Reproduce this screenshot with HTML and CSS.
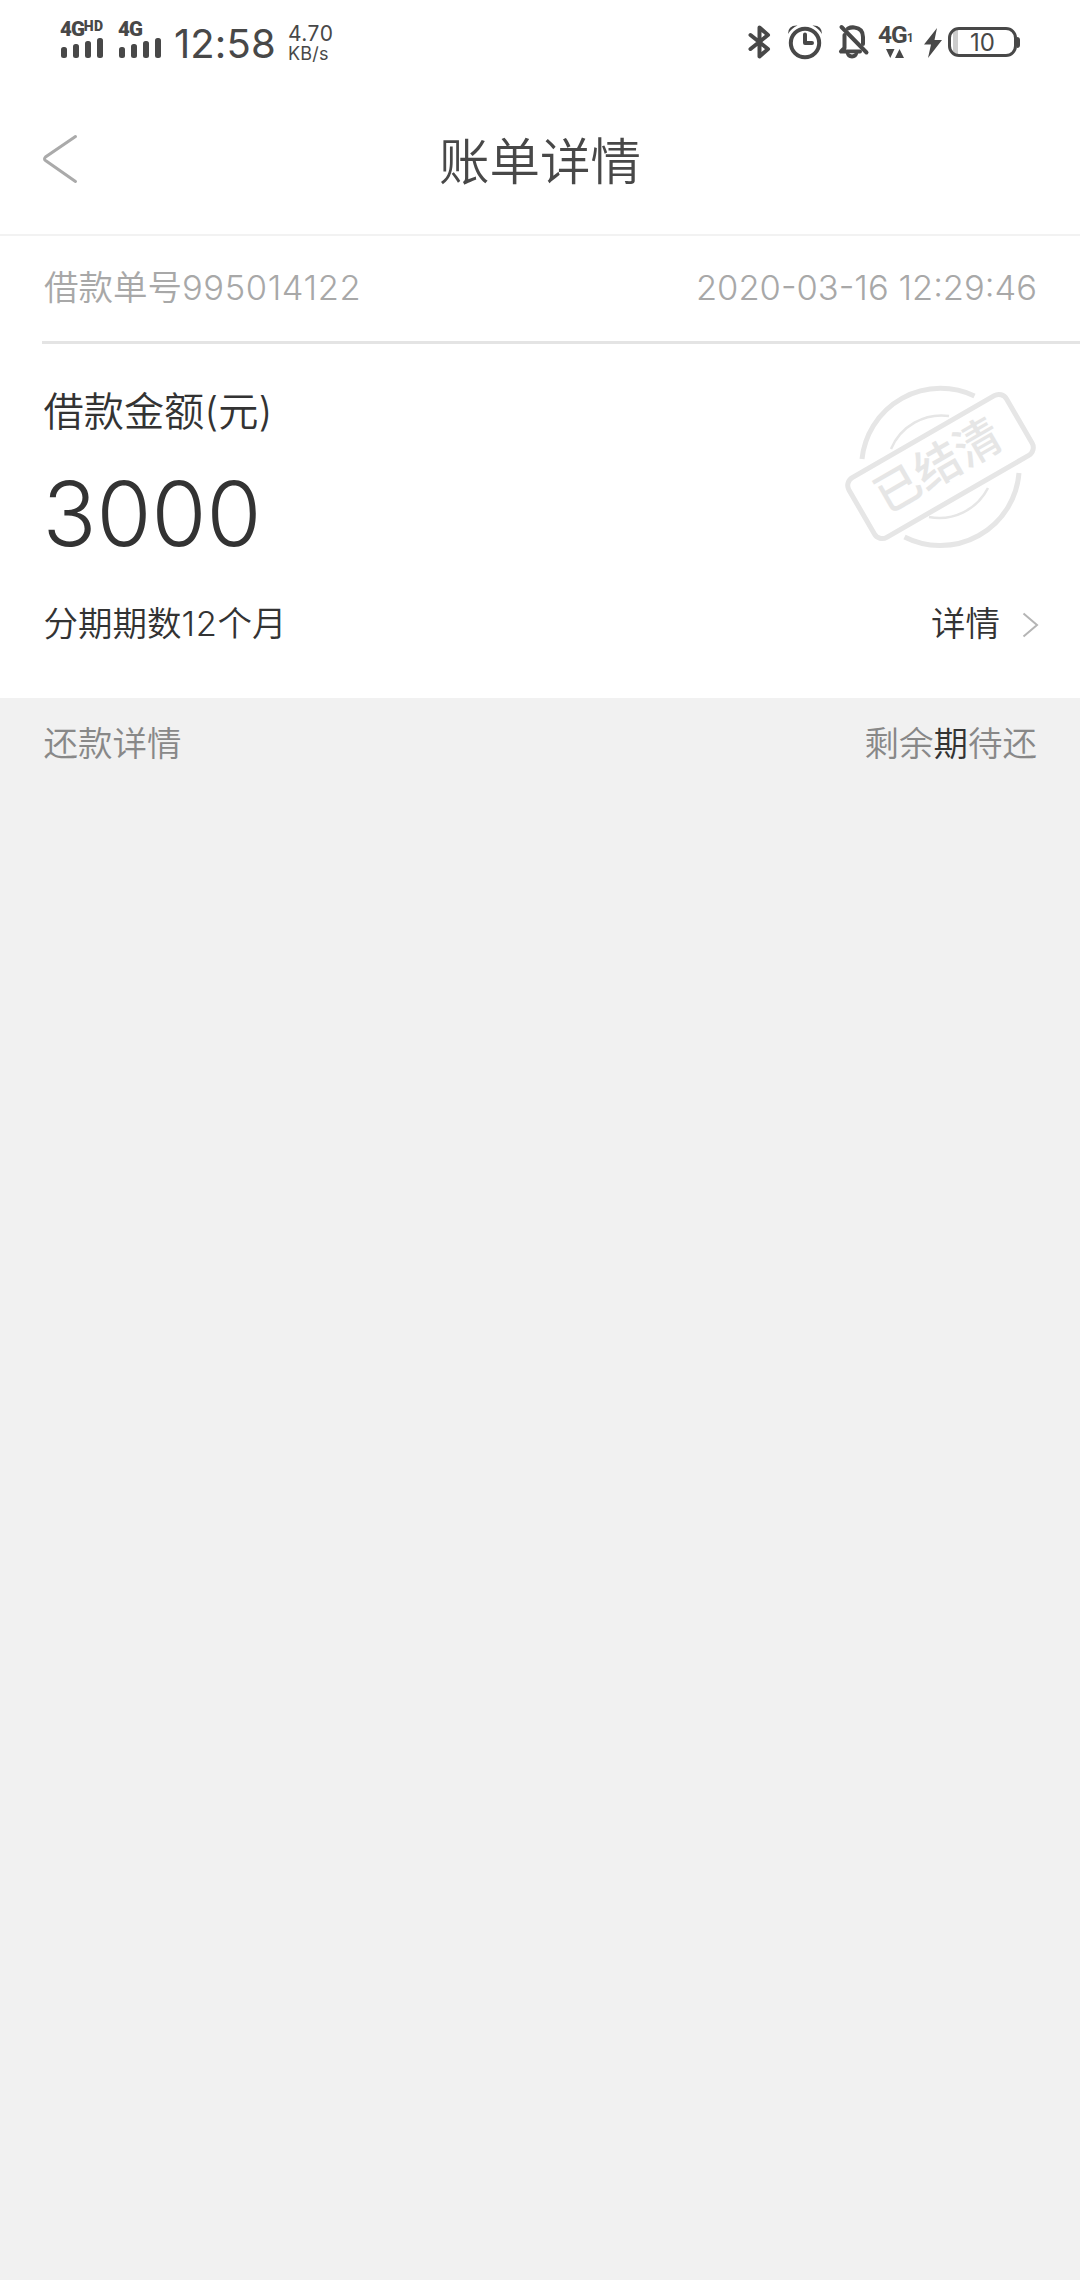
FILE: index.html
```html
<!DOCTYPE html>
<html lang="zh-CN">
<head>
<meta charset="utf-8">
<title>账单详情</title>
<link rel="stylesheet" href="styles.css">
</head>
<body>
<div class="status">
  <div class="signal signal-hd">
    <div class="net">4G<span class="hd">HD</span></div>
    <svg width="44" height="20" viewBox="0 0 44 20"><g class="fill"><rect x="1" y="9" width="6" height="11" rx="2.5"/><rect x="13" y="6" width="6" height="14" rx="2.5"/><rect x="25" y="3" width="6" height="17" rx="2.5"/><rect x="37" y="0" width="6" height="20" rx="2.5"/></g></svg>
  </div>
  <div class="signal">
    <div class="net">4G</div>
    <svg width="44" height="20" viewBox="0 0 44 20"><g class="fill"><rect x="1" y="9" width="6" height="11" rx="2.5"/><rect x="13" y="6" width="6" height="14" rx="2.5"/><rect x="25" y="3" width="6" height="17" rx="2.5"/><rect x="37" y="0" width="6" height="20" rx="2.5"/></g></svg>
  </div>
  <div class="clock">12:58</div>
  <div class="speed"><span class="rate">4.70</span><span class="unit">KB/s</span></div>
  <div class="icons">
    <svg class="bt" width="24" height="36" viewBox="0 0 24 36"><path class="line" d="M2.5 11 L20 25 L11.5 32.5 V3.5 L20 11 L2.5 25"/></svg>
    <svg class="alarm" width="36" height="36" viewBox="0 0 36 36"><circle class="line" cx="18" cy="19" r="14.2"/><path class="line" d="M18 10.500V19H25"/><path class="fill" d="M1 10Q1 1 10.500 1.500Q4.500 4 1 10ZM35 10Q35 1 25.500 1.500Q31.500 4 35 10Z"/></svg>
    <svg class="bell" width="32" height="36" viewBox="0 0 32 36"><path class="line" d="M6.500 11V24L3 27.500H22M10 4.500Q13 3 16.500 3.500Q25 4.500 25 13V20"/><path class="line" d="M3.500 3L28.500 28.500"/><path class="fill" d="M7.500 28H20.500Q19.500 34.500 14 34.500Q8.500 34.500 7.500 28Z"/><path class="hole" d="M11 29.300H17Q14 31.500 11 29.300Z"/></svg>
    <div class="data">
      <div class="gen">4G<span class="sim">1</span></div>
      <svg width="18" height="9" viewBox="0 0 18 9"><path class="fill" d="M0 0H8.500L4.250 9ZM9 9L13.500 0L18 9Z"/></svg>
    </div>
    <svg class="bolt" width="20" height="32" viewBox="0 0 20 32"><path class="fill" d="M14 1L1 17.500H8L5 31L19 13H11.500Z"/></svg>
    <div class="battery"><span class="level">10</span></div>
    <span class="tip"></span>
  </div>
</div>
<header class="header">
  <svg class="back" width="36" height="50" viewBox="0 0 36 50"><path d="M33.500 2.500L3.500 23Q1.500 25 3.500 26.500L33.500 47.500"/></svg>
  <h1 class="title">账单详情</h1>
</header>
<main>
  <section class="order">
    <span>借款单号<span class="number">995014122</span></span><time class="time">2020<span class="dash">-</span>03<span class="dash">-</span>16 12:29:46</time>
  </section>
  <section class="loan">
    <div class="top">
      <div>
        <div class="label">借款金额(元)</div>
        <div class="amount">3000</div>
      </div>
      <svg class="stamp" width="194" height="164" viewBox="843 385 194 164">
        <g class="ring"><path class="outer" d="M862 459A79 79 0 0 1 974.500 396M904.500 537A79 79 0 0 0 1019 473"/><path class="inner" d="M891 449A55 55 0 0 1 949 416M929 517A55 55 0 0 0 988 488"/><rect class="outer" x="-91" y="-34.500" width="182" height="69" rx="9" transform="translate(940.500 466.500) rotate(-30)"/></g>
        <text class="stamp-text" x="938" y="466" transform="rotate(-30 938 466)" text-anchor="middle" dy="16">已结清</text>
      </svg>
    </div>
    <div class="terms"><span>分期期数<span class="number">12</span>个月</span><span class="more">详情<svg width="17" height="26" viewBox="0 0 17 26"><path d="M1.500 1.500L15 13L1.500 24.500"/></svg></span></div>
  </section>
  <section class="repay"><span>还款详情</span><span>剩余<b class="period">期</b>待还</span></section>
</main>
</body>
</html>
```
FILE: styles.css
```css
* { box-sizing: border-box; }
body {
  margin: 0;
  min-height: 2280px;
  background: #f1f1f1;
  color: #333;
  font-family: Inter, "Noto Sans CJK SC", sans-serif;
  font-weight: 350;
  font-size: 34.5px;
}
svg { display: block; flex: none; overflow: visible; }
.fill { fill: #484848; }
.line { fill: none; stroke: #484848; stroke-width: 4; stroke-linecap: round; stroke-linejoin: round; }
.hole { fill: #fff; }

.status {
  display: flex;
  align-items: flex-start;
  height: 84px;
  padding-left: 60px;
  background: #fff;
  color: #484848;
}
.signal { width: 58px; padding-top: 20px; }
.signal svg { margin-top: 1px; margin-left: -0.5px; }
.net {
  display: flex;
  height: 17px;
  font: 900 20.5px/19px Roboto, sans-serif;
  letter-spacing: -1px;
}
.hd { font-size: 14px; line-height: 13px; letter-spacing: 0.3px; }
.clock { width: 112px; margin-left: -2px; padding: 20px 0 0; font-weight: 400; font-size: 40px; line-height: 48px; letter-spacing: 0.1px; }
.speed { display: flex; flex-direction: column; margin-left: 2px; padding-top: 23px; font-weight: 400; }
.rate { font-size: 21px; line-height: 22px; letter-spacing: 0.5px; }
.unit { font-size: 18px; line-height: 18px; letter-spacing: 0.2px; }
.icons { display: flex; align-items: flex-start; margin-left: auto; width: 333px; padding-top: 24px; }
.bt { margin-left: 1px; }
.alarm { margin-left: 15px; }
.bell { margin-left: 15px; }
.data { margin: 1px 0 0 8px; width: 45px; }
.gen { display: flex; align-items: flex-end; height: 20px; font: 700 24.5px/20px Roboto, sans-serif; letter-spacing: -1px; }
.sim { font-size: 12px; line-height: 13px; }
.data svg { margin: 4px 0 0 8px; }
.bolt { margin: 3px 0 0 0; }
.battery {
  width: 69px;
  height: 30px;
  margin: 3px 0 0 5px;
  border: 3px solid #484848;
  border-radius: 11px;
  background: linear-gradient(90deg, #fff 2px, #ccc 2px, #ccc 7px, #fff 7px);
  text-align: center;
}
.level { display: block; font-weight: 400; font-size: 24px; line-height: 25px; }
.tip { width: 3px; height: 11px; margin-top: 13px; border-radius: 0 3px 3px 0; background: #484848; }

.header {
  display: grid;
  grid-template-columns: 42px 36px 1fr 78px;
  align-items: center;
  height: 152px;
  border-bottom: 2px solid #f2f2f2;
  background: #fff;
}
.back { grid-column: 2; }
.back path { fill: none; stroke: #aaa; stroke-width: 3; stroke-linecap: round; }
.title { margin: 0; padding-top: 5px; color: #484848; font-weight: 350; font-size: 50.5px; line-height: 72px; text-align: center; }

.order {
  display: flex;
  justify-content: space-between;
  align-items: baseline;
  height: 105px;
  padding: 26px 43px 0 44px;
  background: #fff;
  color: #a8a8a8;
  line-height: 52px;
}
.amount { font-weight: 300; }
.number { letter-spacing: 0.6px; }
.dash { vertical-align: 2px; line-height: 1; }
.loan { height: 357px; background: #fff; }
.loan::before { content: ""; display: block; height: 3px; margin-left: 42px; background: #e4e4e4; }
.top { display: flex; justify-content: space-between; height: 240px; padding: 41px 43px 0 43.5px; }
.label { font-size: 40.2px; line-height: 54px; }
.amount { margin: 25px 0 0 -1px; font-size: 89px; line-height: 100px; }
.ring { fill: none; stroke: #e6e6e6; stroke-linecap: butt; }
.outer { stroke-width: 5; }
.inner { stroke-width: 2.500; }
.stamp-text { fill: #e6e6e6; font-weight: 500; font-size: 46px; }
.terms { display: flex; justify-content: space-between; align-items: center; height: 73px; padding: 0 41px 0 43.5px; }
.more { display: flex; align-items: center; gap: 22px; }
.more svg { margin-top: 8px; }
.more path { fill: none; stroke: #b5b5b5; stroke-width: 2; }
.repay {
  display: flex;
  justify-content: space-between;
  align-items: center;
  height: 86px;
  padding: 0 43px 0 43.5px;
  color: #888;
}
.period { color: #333; font-weight: 350; }
```
